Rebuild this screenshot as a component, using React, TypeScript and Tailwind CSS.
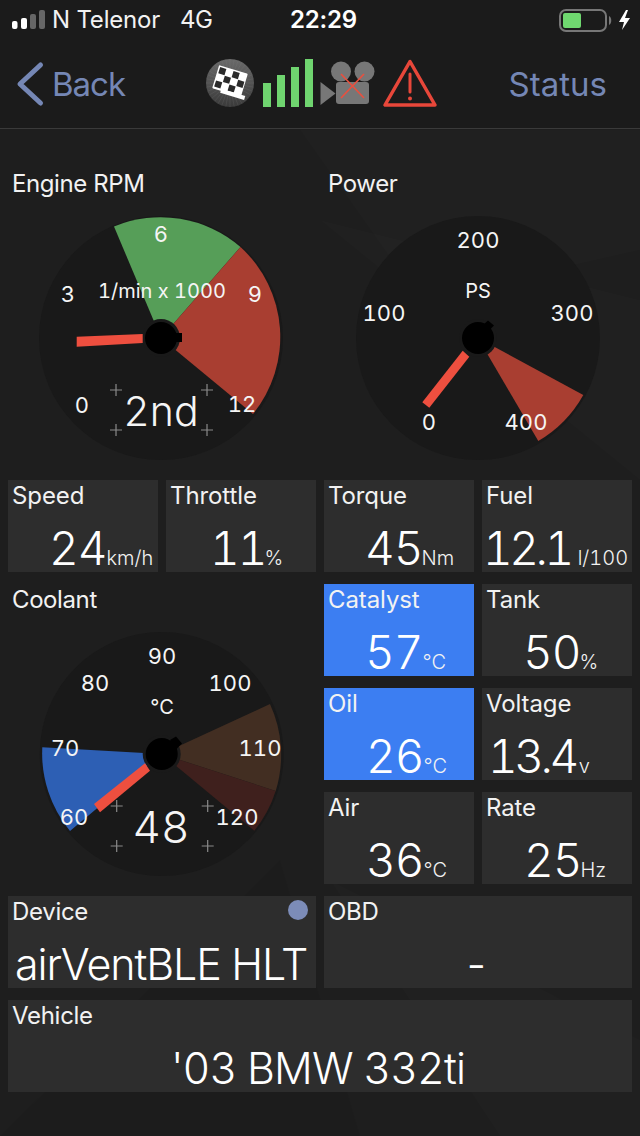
const FONT = "font-['Inter','Liberation_Sans',sans-serif]";

type GaugeText = { t: string; x: number; y: number; s?: number; light?: boolean };
type Wedge = { from: [number, number]; to: [number, number]; fill: string };

function Gauge({
  label, cx, cy, vx, vy, wedges, needle, nub, texts, plus,
}: {
  label: string; cx: number; cy: number; vx: number; vy: number;
  wedges: Wedge[]; needle: string; nub: string; texts: GaugeText[]; plus?: boolean;
}) {
  const r = 122;
  return (
    <div className="col-span-2 flex flex-col">
      <div className="h-8 pl-[4px] text-[24px] leading-8 tracking-[-0.4px] text-[#f2f2f2]">{label}</div>
      <svg className="block h-[268px] w-full" viewBox={`${vx} ${vy} 308 268`}>
        <circle cx={cx} cy={cy} r={r} fill="#191919" />
        {wedges.map((w, i) => (
          <path key={i} d={`M${cx} ${cy}L${w.from[0]} ${w.from[1]}A${r} ${r} 0 0 1 ${w.to[0]} ${w.to[1]}Z`} fill={w.fill} />
        ))}
        <circle cx={cx} cy={cy} r={19} fill="#191919" />
        <path d={nub} fill="#000" />
        <circle cx={cx} cy={cy} r={16} fill="#000" />
        <polygon points={needle} fill="#ee4f3f" />
        {plus && [[-45, -20], [46, -20], [-45, 20], [46, 20]].map(([dx, dy], i) => (
          <path key={i} d={`M${cx + dx - 6} ${cy + 72 + dy}h12M${cx + dx} ${cy + 72 + dy - 6}v12`} stroke="#8a8a8a" strokeWidth={1.2} fill="none" />
        ))}
        {texts.map((l, i) => (
          <text key={i} x={l.x} y={l.y} textAnchor="middle" dominantBaseline="central" fontSize={l.s ?? 22} fill="#f5f5f5" className={`tabular-nums ${l.light ? "font-light" : "font-normal"}`} style={{ fontFamily: "Inter, sans-serif" }}>{l.t}</text>
        ))}
      </svg>
    </div>
  );
}

function Card({ label, value, unit, pad, blue, track, unitGap }: {
  label: string; value: string; unit?: string; pad?: string; blue?: boolean; track?: string; unitGap?: string;
}) {
  return (
    <div className={`relative flex h-[92px] flex-col ${blue ? "bg-[#3c7ef2]" : "bg-[#2d2d2d]"}`}>
      <div className="h-8 pl-[4px] text-[24px] leading-8 tracking-[-0.1px] text-[#f2f2f2]">{label}</div>
      <div className={`flex items-baseline pt-[9px] ${pad ?? ""}`}>
        <span className={`text-[46px] leading-[54px] font-light tabular-nums text-white ${track ?? "tracking-[-1px]"}`}>{value}</span>
        {unit && <span className={`text-[20px] leading-none font-light tabular-nums text-[#f2f2f2] ${unitGap ?? "ml-0"}`}>{unit}</span>}
      </div>
    </div>
  );
}

function WideCard({ label, value, span, dot, left }: { label: string; value: string; span: string; dot?: boolean; left?: boolean }) {
  return (
    <div className={`relative flex h-[92px] flex-col bg-[#2d2d2d] ${span}`}>
      <div className="h-8 pl-[4px] text-[24px] leading-8 tracking-[-0.3px] text-[#f2f2f2]">{label}</div>
      <div className={`pt-[9px] text-[43px] leading-[54px] font-light tabular-nums text-white ${left ? "pl-[7px] tracking-[-1.1px]" : "pr-1 text-center tracking-[-0.9px]"}`}>{value}</div>
      {dot && <span className="absolute top-[4px] right-[8px] h-5 w-5 rounded-full bg-[#7c8cb8]" />}
    </div>
  );
}

function StatusBar() {
  return (
    <div className="flex h-10 items-center pl-3 pr-[10px] text-[24px] text-[#f2f2f2]">
      <svg className="h-10 w-[34px]" viewBox="12 0 34 40">
        <rect x="12" y="21" width="5.5" height="8" rx="2" fill="#fff" />
        <rect x="21" y="18" width="6" height="11" rx="2" fill="#fff" />
        <rect x="30" y="14" width="6" height="15" rx="2" fill="#666" />
        <rect x="39" y="10" width="6" height="19" rx="2" fill="#666" />
      </svg>
      <span className="ml-[6px] w-[128px] tracking-[-0.2px]">N Telenor</span>
      <span className="w-[110px] tracking-[-0.4px]">4G</span>
      <span className="font-semibold tracking-[-0.2px] text-white">22:29</span>
      <svg className="ml-auto h-10 w-[72px]" viewBox="559 0 72 40">
        <rect x="561" y="10" width="46" height="21" rx="6" fill="none" stroke="#777" strokeWidth="2" />
        <rect x="564" y="13" width="18" height="15" rx="2" fill="#6fd86f" />
        <path d="M610 16c3 1 3 8 0 9z" fill="#777" />
        <path d="M627 10l-7 12h5l-2 8 8-12h-5l3-8z" fill="#fff" />
      </svg>
    </div>
  );
}

function FlagIcon() {
  const rays = Array.from({ length: 36 }, (_, i) => (i * Math.PI) / 18);
  const cells = [[0, 0], [2, 0], [1, 1], [3, 1], [0, 2], [2, 2]];
  return (
    <svg className="h-[50px] w-[50px]" viewBox="204 59 50 50">
      <defs>
        <linearGradient id="flagbg" x1="0" y1="0" x2="0" y2="1">
          <stop offset="0" stopColor="#6a6a6a" />
          <stop offset="1" stopColor="#3a3a3a" />
        </linearGradient>
      </defs>
      <circle cx="229" cy="84" r="24" fill="url(#flagbg)" />
      {rays.map((a, i) => (
        <line key={i} x1={229} y1={84} x2={229 + 24 * Math.cos(a)} y2={84 + 24 * Math.sin(a)} stroke="#8a8a8a" strokeWidth="0.8" opacity="0.2" />
      ))}
      <g transform="translate(229 82) rotate(17)">
        <rect x="-15" y="-12" width="30" height="24" fill="#fff" rx="1" />
        {cells.map(([c, r], i) => (
          <rect key={i} x={-13.5 + c * 7} y={-10.5 + r * 7} width="6.5" height="6.5" fill="#2a2a2a" />
        ))}
        <rect x="-6" y="10" width="25" height="4" fill="#fff" />
      </g>
    </svg>
  );
}

function NavBar() {
  return (
    <div className="flex h-[89px] items-center border-b border-[#3a3a3a] bg-[#1b1b1b] pr-[33px] pl-[16px] pb-[1px] text-[#7587b5]">
      <svg className="h-[46px] w-[30px]" viewBox="16 61 30 46">
        <path d="M40.500 65L20 84l20.500 19" fill="none" stroke="#7587b5" strokeWidth="5" strokeLinecap="round" strokeLinejoin="round" />
      </svg>
      <span className="mt-[2px] ml-[6px] w-[153px] text-[33px] leading-none tracking-[-1px]">Back</span>
      <div className="-mt-[1px] flex items-center">
        <FlagIcon />
        <svg className="ml-[6px] h-[50px] w-[52px]" viewBox="261 59 52 50">
          <rect x="263" y="84" width="8" height="24" fill="#6fd46f" />
          <rect x="277" y="76" width="8" height="32" fill="#6fd46f" />
          <rect x="291" y="68" width="8" height="40" fill="#6fd46f" />
          <rect x="305" y="60" width="8" height="48" fill="#6fd46f" />
        </svg>
        <svg className="ml-[6px] h-[50px] w-[56px]" viewBox="319 59 56 50">
          <circle cx="341" cy="72.500" r="10" fill="#777" />
          <circle cx="364.500" cy="72.500" r="10" fill="#777" />
          <rect x="336" y="83" width="33" height="22" rx="3" fill="#777" />
          <path d="M320.500 83l15 11.500-15 11.500z" fill="#777" />
          <path d="M341 99l23-24M341 75l23 24" stroke="#e8503f" strokeWidth="1.700" />
        </svg>
        <svg className="ml-[7px] h-[50px] w-[56px]" viewBox="382 59 56 50">
          <path d="M410 62.500L385 106h50z" fill="none" stroke="#e8473a" strokeWidth="3.500" strokeLinejoin="round" />
          <path d="M410 75v18" stroke="#e8473a" strokeWidth="3" strokeLinecap="round" />
          <circle cx="410" cy="99.500" r="2" fill="#e8473a" />
        </svg>
      </div>
      <span className="mt-[2px] ml-auto text-[33px] leading-none">Status</span>
    </div>
  );
}

export default function App() {
  return (
    <div className={`relative h-[1136px] w-[640px] overflow-hidden bg-[#1e1e1e] ${FONT}`}>
      <svg className="absolute inset-0 h-full w-full" viewBox="0 0 640 1136">
        <path d="M300 130L420 300 640 250V130z" fill="#fff" opacity="0.01" />
        <path d="M320 220L640 480V300z" fill="#fff" opacity="0.012" />
        <path d="M330 880L640 1040V1136H500z" fill="#fff" opacity="0.01" />
        <path d="M0 1136L280 860 360 1136z" fill="#000" opacity="0.04" />
      </svg>
      <div className="relative">
        <div className="bg-[#1b1b1b]"><StatusBar /></div>
        <NavBar />
        <div className="grid grid-cols-[150px_150px_150px_150px] grid-rows-[300px_92px_92px_92px_92px_92px_92px] gap-x-2 gap-y-3 pt-[39px] pl-2">
          <Gauge
            label="Engine RPM" cx={161} cy={338} vx={8} vy={200}
            wedges={[
              { from: [114, 226.500], to: [240.500, 247], fill: "#569e58" },
              { from: [240.500, 247], to: [253, 414], fill: "#a93e31" },
            ]}
            needle="76.700,336.700 142.700,334 142.700,343 76.700,346.700"
            nub="M170 333h12v9h-12z"
            texts={[
              { t: "3", x: 68, y: 294 }, { t: "6", x: 161, y: 234 }, { t: "9", x: 255, y: 294 },
              { t: "12", x: 242, y: 404 }, { t: "0", x: 82, y: 405 },
              { t: "1/min x 1000", x: 162, y: 291, s: 20 }, { t: "2nd", x: 161, y: 411, s: 41, light: true },
            ]}
            plus
          />
          <Gauge
            label="Power" cx={478} cy={338} vx={324} vy={200}
            wedges={[{ from: [583.300, 395], to: [538.300, 441], fill: "#a93e31" }]}
            needle="422.300,402.300 429.300,407.700 469.300,356.700 462.700,350.700"
            nub="M482 326l6-5.500 6 5-6 6z"
            texts={[
              { t: "200", x: 478, y: 240 }, { t: "PS", x: 478, y: 291, s: 20 },
              { t: "100", x: 384, y: 313 }, { t: "300", x: 572, y: 313 },
              { t: "0", x: 429, y: 422 }, { t: "400", x: 526, y: 422 },
            ]}
          />
          <Card label="Speed" value="24" unit="km/h" pad="pl-[41px]" />
          <Card label="Throttle" value="11" unit="%" pad="pl-[44px]" track="tracking-[-2px]" unitGap="-ml-[1px]" />
          <Card label="Torque" value="45" unit="Nm" pad="pl-[41px]" unitGap="-ml-[1px]" />
          <Card label="Fuel" value="12.1" unit="l/100" pad="pl-[1px]" track="tracking-[-3.5px]" unitGap="ml-[7px]" />
          <div className="col-span-2 row-span-3">
            <Gauge
              label="Coolant" cx={161.700} cy={754} vx={8} vy={616}
              wedges={[
                { from: [70, 831], to: [42.300, 747.300], fill: "#2d5fb4" },
                { from: [270, 704], to: [275.700, 791], fill: "#422e22" },
                { from: [275.700, 791], to: [254.300, 830.700], fill: "#3f201d" },
              ]}
              needle="94,804 100,812.300 150,770.700 145,763.300"
              nub="M170 740l6-3.500 6 7-6 6z"
              texts={[
                { t: "90", x: 162, y: 656 }, { t: "80", x: 95, y: 683 }, { t: "100", x: 230, y: 683 },
                { t: "°C", x: 162, y: 707, s: 20 }, { t: "70", x: 65, y: 748 }, { t: "110", x: 260, y: 748 },
                { t: "60", x: 74, y: 817 }, { t: "120", x: 237, y: 817 }, { t: "48", x: 161, y: 827, s: 44, light: true },
              ]}
              plus
            />
          </div>
          <Card label="Catalyst" value="57" unit="°C" pad="pl-[41px]" blue />
          <Card label="Tank" value="50" unit="%" pad="pl-[41px]" unitGap="-ml-[1px]" />
          <Card label="Oil" value="26" unit="°C" pad="pl-[42px]" blue />
          <Card label="Voltage" value="13.4" unit="v" pad="pl-[6px]" track="tracking-[-3.5px]" unitGap="ml-[3px]" />
          <Card label="Air" value="36" unit="°C" pad="pl-[42px]" />
          <Card label="Rate" value="25" unit="Hz" pad="pl-[42px]" unitGap="-ml-[1px]" />
          <WideCard label="Device" value="airVentBLE HLT" span="col-span-2" dot left />
          <WideCard label="OBD" value="-" span="col-span-2" />
          <WideCard label="Vehicle" value="'03 BMW 332ti" span="col-span-4" />
        </div>
      </div>
    </div>
  );
}
